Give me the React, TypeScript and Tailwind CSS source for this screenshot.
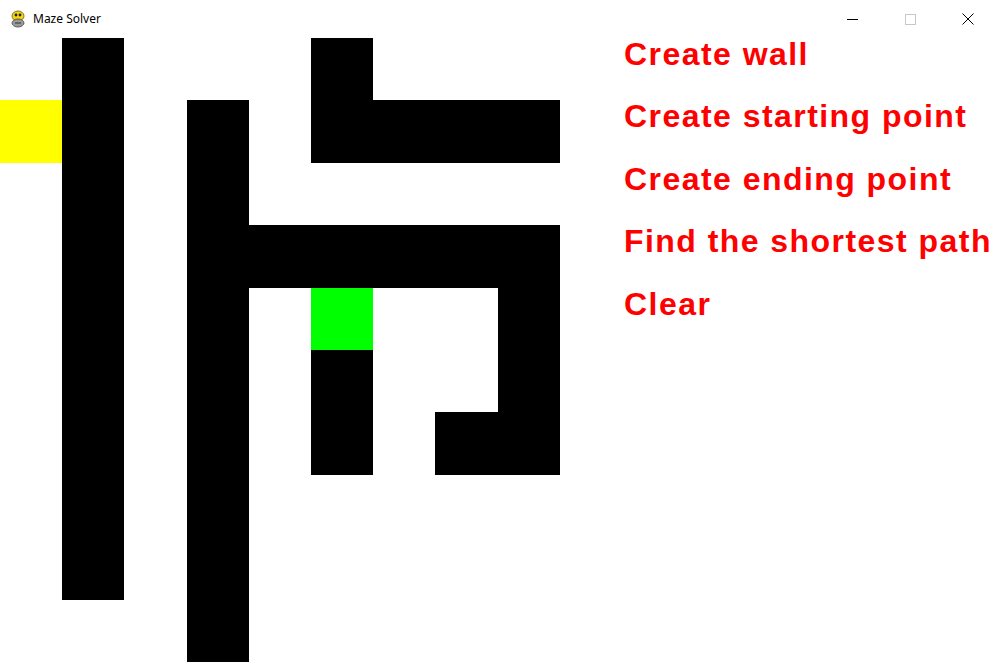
const W = "bg-black";
const S = "bg-[#ffff00]";
const E = "bg-[#00ff00]";
const _ = "bg-white";

// 10x10 maze, row by row
const maze: string[][] = [
  [_, W, _, _, _, W, _, _, _, _],
  [S, W, _, W, _, W, W, W, W, _],
  [_, W, _, W, _, _, _, _, _, _],
  [_, W, _, W, W, W, W, W, W, _],
  [_, W, _, W, _, E, _, _, W, _],
  [_, W, _, W, _, W, _, _, W, _],
  [_, W, _, W, _, W, _, W, W, _],
  [_, W, _, W, _, _, _, _, _, _],
  [_, W, _, W, _, _, _, _, _, _],
  [_, _, _, W, _, _, _, _, _, _],
];

const menu = [
  "Create wall",
  "Create starting point",
  "Create ending point",
  "Find the shortest path",
  "Clear",
];

function PygameIcon() {
  return (
    <svg width="18" height="18" viewBox="0 0 18 18">
      <ellipse cx="9" cy="6" rx="6" ry="5" fill="#f5d60a" stroke="#6b5a10" strokeWidth="0.8" />
      <ellipse cx="9" cy="13" rx="6" ry="4" fill="#9a9a9a" stroke="#444" strokeWidth="0.8" />
      <circle cx="7" cy="5" r="1.4" fill="#222" />
      <circle cx="11" cy="5" r="1.4" fill="#222" />
      <path d="M6 13 h6" stroke="#333" strokeWidth="1" />
    </svg>
  );
}

export default function App() {
  return (
    <div className="w-[1002px] h-[662px] bg-white overflow-hidden flex flex-col">
      {/* Title bar */}
      <div className="h-[38px] flex items-center justify-between shrink-0">
        <div className="flex items-center gap-[6px] pl-[9px] pb-[1px]">
          <PygameIcon />
          <span className="text-[12px] text-black" style={{ fontFamily: '"Segoe UI", "Noto Sans", sans-serif' }}>
            Maze Solver
          </span>
        </div>
        <div className="flex items-center h-full pr-[5px]">
          <div className="w-[58px] h-full flex items-center justify-center">
            <div className="w-[11px] h-px bg-black" />
          </div>
          <div className="w-[58px] h-full flex items-center justify-center">
            <div className="w-[11px] h-[11px] border border-[#c8c8c8]" />
          </div>
          <div className="w-[58px] h-full flex items-center justify-center">
            <svg width="12" height="12" viewBox="0 0 12 12">
              <path d="M0.5 0.5 L11.5 11.5 M11.5 0.5 L0.5 11.5" stroke="#000" strokeWidth="1" />
            </svg>
          </div>
        </div>
      </div>

      <div className="flex flex-1">
        {/* Maze grid */}
        <div className="w-[622px] h-[624px] grid grid-cols-10 grid-rows-10 shrink-0">
          {maze.flat().map((c, i) => (
            <div key={i} className={c} />
          ))}
        </div>

        {/* Menu */}
        <div className="flex flex-col pl-[2px]">
          {menu.map((m) => (
            <div
              key={m}
              className="h-[62.4px] text-[32px] leading-[32px] font-bold text-[#ff0000] tracking-[1.45px] whitespace-nowrap"
              style={{ fontFamily: '"Liberation Sans", Arial, sans-serif' }}
            >
              {m}
            </div>
          ))}
        </div>
      </div>
    </div>
  );
}
